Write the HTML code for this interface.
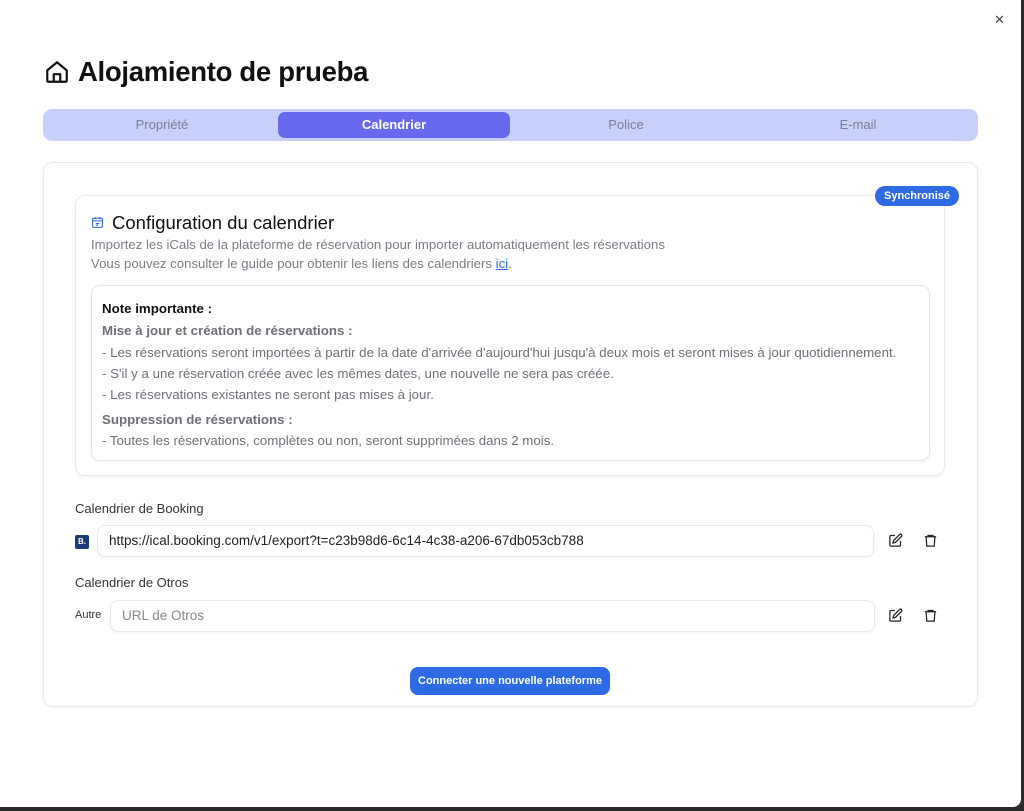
<!DOCTYPE html>
<html><head><meta charset="utf-8"><style>
*{box-sizing:border-box;margin:0;padding:0}
html,body{width:1024px;height:811px;overflow:hidden;background:#2b2b2b;font-family:"Liberation Sans",sans-serif}
.page{position:absolute;left:0;top:0;width:1021px;height:807px;background:#fff;border-radius:0 0 8px 0}
.abs{position:absolute}
.close{left:994px;top:12px;font-size:13px;color:#444}
h1{position:absolute;left:78px;top:56px;font-size:27.5px;font-weight:bold;color:#111;letter-spacing:-0.3px}
.tabs{left:43px;top:109px;width:935px;height:32px;background:#c7d0fb;border-radius:9px}
.tab{position:absolute;top:0;height:32px;line-height:32px;width:232px;text-align:center;font-size:13px;color:#7a7f95}
.tab.on{top:3px;height:26px;line-height:26px;background:#6868ee;color:#fff;font-weight:bold;border-radius:7px}
.card{left:43px;top:162px;width:935px;height:545px;border:1px solid #e8e8ec;border-radius:10px;box-shadow:0 1px 3px rgba(0,0,0,.05)}
.inner{left:75px;top:195px;width:870px;height:281px;border:1px solid #e8e8ec;border-radius:10px;box-shadow:0 1px 3px rgba(0,0,0,.06)}
.badge{left:875px;top:186px;width:84px;height:20px;background:#2d6ae3;border-radius:10px;color:#fff;font-size:11px;font-weight:bold;text-align:center;line-height:20px}
.t2{left:112px;top:212px;font-size:18.5px;color:#111}
.sub{left:91px;font-size:13.2px;color:#7b7b85}
.note{left:91px;top:285px;width:839px;height:176px;border:1px solid #e4e4ea;border-radius:9px;box-shadow:0 1px 3px rgba(0,0,0,.06)}
.n{left:102px;font-size:13.3px;color:#6f6f78}
.nb{font-weight:bold}
.lbl{left:75px;font-size:13px;color:#333}
.inp{height:32px;border:1px solid #e8e8ec;border-radius:8px;box-shadow:0 1px 2px rgba(0,0,0,.05);font-size:13.5px;line-height:30px;padding-left:11px;color:#222}
.btn{left:410px;top:667px;width:200px;height:28px;background:#2d6ae3;border-radius:8px;color:#fff;font-size:11px;font-weight:bold;text-align:center;line-height:28px}
</style></head><body>
<div class="page">
<div class="abs close">✕</div>
<svg class="abs" style="left:44px;top:59px" width="26" height="26" viewBox="0 0 24 24" fill="none" stroke="#111" stroke-width="2" stroke-linejoin="round"><path d="M3 10.5 12 3l9 7.5V20a1 1 0 0 1-1 1H4a1 1 0 0 1-1-1z"/><path d="M9 21v-7h6v7"/></svg>
<h1>Alojamiento de prueba</h1>
<div class="abs tabs">
<div class="tab" style="left:3px">Propriété</div>
<div class="tab on" style="left:235px;width:232px">Calendrier</div>
<div class="tab" style="left:467px">Police</div>
<div class="tab" style="left:699px">E-mail</div>
</div>
<div class="abs card"></div>
<div class="abs inner"></div>
<div class="abs badge">Synchronisé</div>
<svg class="abs" style="left:91px;top:216px" width="13" height="13" viewBox="0 0 24 24" fill="none" stroke="#2d6ae3" stroke-width="2"><rect x="3" y="4" width="18" height="17" rx="2"/><path d="M8 2v4M16 2v4M3 9h18M9 14h6M9 17h4"/></svg>
<div class="abs t2">Configuration du calendrier</div>
<div class="abs sub" style="top:237px">Importez les iCals de la plateforme de réservation pour importer automatiquement les réservations</div>
<div class="abs sub" style="top:256px">Vous pouvez consulter le guide pour obtenir les liens des calendriers <span style="color:#2d6ae3;text-decoration:underline">ici</span>.</div>
<div class="abs note"></div>
<div class="abs n nb" style="top:301px;color:#111">Note importante :</div>
<div class="abs n nb" style="top:323px">Mise à jour et création de réservations :</div>
<div class="abs n" style="top:345px">- Les réservations seront importées à partir de la date d'arrivée d'aujourd'hui jusqu'à deux mois et seront mises à jour quotidiennement.</div>
<div class="abs n" style="top:366px">- S'il y a une réservation créée avec les mêmes dates, une nouvelle ne sera pas créée.</div>
<div class="abs n" style="top:387px">- Les réservations existantes ne seront pas mises à jour.</div>
<div class="abs n nb" style="top:412px">Suppression de réservations :</div>
<div class="abs n" style="top:433px">- Toutes les réservations, complètes ou non, seront supprimées dans 2 mois.</div>
<div class="abs lbl" style="top:501px">Calendrier de Booking</div>
<div class="abs" style="left:75px;top:535px;width:14px;height:14px;background:#1b3a7a;border-radius:2px;color:#fff;font-size:8px;font-weight:bold;text-align:center;line-height:14px">B.</div>
<div class="abs inp" style="left:97px;top:525px;width:777px">https://ical.booking.com/v1/export?t=c23b98d6-6c14-4c38-a206-67db053cb788</div>
<div class="abs lbl" style="top:575px">Calendrier de Otros</div>
<div class="abs" style="left:75px;top:609px;font-size:11px;color:#333">Autre</div>
<div class="abs inp" style="left:110px;top:600px;width:765px;color:#888">URL de Otros</div>
<svg class="abs" style="left:888px;top:533px" width="15" height="15" viewBox="0 0 24 24" fill="none" stroke="#222" stroke-width="2"><path d="M11 4H5a2 2 0 0 0-2 2v13a2 2 0 0 0 2 2h13a2 2 0 0 0 2-2v-6"/><path d="M18.5 2.5a2.1 2.1 0 0 1 3 3L12 15l-4 1 1-4z"/></svg>
<svg class="abs" style="left:923px;top:533px" width="15" height="15" viewBox="0 0 24 24" fill="none" stroke="#222" stroke-width="2"><path d="M3 6h18M8 6V4h8v2M5 6l1 15h12l1-15"/></svg>
<svg class="abs" style="left:888px;top:608px" width="15" height="15" viewBox="0 0 24 24" fill="none" stroke="#222" stroke-width="2"><path d="M11 4H5a2 2 0 0 0-2 2v13a2 2 0 0 0 2 2h13a2 2 0 0 0 2-2v-6"/><path d="M18.5 2.5a2.1 2.1 0 0 1 3 3L12 15l-4 1 1-4z"/></svg>
<svg class="abs" style="left:923px;top:608px" width="15" height="15" viewBox="0 0 24 24" fill="none" stroke="#222" stroke-width="2"><path d="M3 6h18M8 6V4h8v2M5 6l1 15h12l1-15"/></svg>
<div class="abs btn">Connecter une nouvelle plateforme</div>
</div>
</body></html>
